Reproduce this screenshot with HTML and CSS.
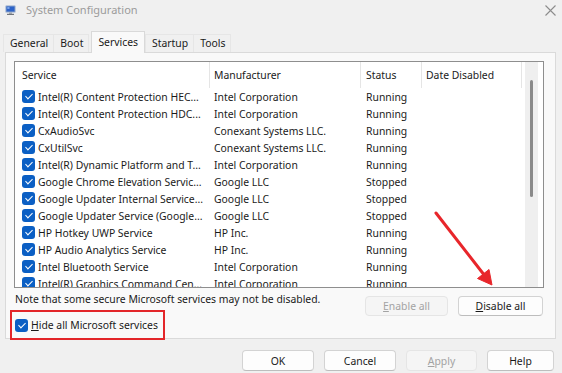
FILE: index.html
```html
<!DOCTYPE html>
<html>
<head>
<meta charset="utf-8">
<title>System Configuration</title>
<link rel="stylesheet" href="styles.css">
</head>
<body>
<div class="window">
  <div class="titlebar">
    <svg class="appicon" viewBox="0 0 11 10" aria-hidden="true">
      <rect x="0.5" y="0.5" width="10" height="7" rx="0.6" fill="#8aa2c8"/>
      <rect x="1.5" y="1.5" width="8" height="5" fill="#2d63c8"/>
      <rect x="2.3" y="2.2" width="2.2" height="1.6" fill="#8fb4f0"/>
      <rect x="4" y="7.5" width="3" height="1.3" fill="#9aa0a8"/>
      <rect x="2" y="8.8" width="7" height="1.2" fill="#70757d"/>
    </svg>
    <span class="title">System Configuration</span>
    <svg class="close" viewBox="0 0 11 11" aria-hidden="true">
      <path d="M0.5 0.5 L10.5 10.5 M10.5 0.5 L0.5 10.5" stroke="#8c8c8c" stroke-width="1.1" fill="none"/>
    </svg>
  </div>

  <div class="tabs">
    <div class="tab">General</div>
    <div class="tab">Boot</div>
    <div class="tab active">Services</div>
    <div class="tab">Startup</div>
    <div class="tab">Tools</div>
  </div>

  <div class="panel">
    <div class="list">
      <div class="grid">
        <div class="head">
          <div class="cell c1">Service</div>
          <div class="cell c2">Manufacturer</div>
          <div class="cell c3">Status</div>
          <div class="cell c4">Date Disabled</div>
        </div>
        <div class="row"><div class="cell c1"><span class="cb"></span><span class="txt">Intel(R) Content Protection HEC...</span></div><div class="cell c2">Intel Corporation</div><div class="cell c3">Running</div><div class="cell c4"></div></div>
        <div class="row"><div class="cell c1"><span class="cb"></span><span class="txt">Intel(R) Content Protection HDC...</span></div><div class="cell c2">Intel Corporation</div><div class="cell c3">Running</div><div class="cell c4"></div></div>
        <div class="row"><div class="cell c1"><span class="cb"></span><span class="txt">CxAudioSvc</span></div><div class="cell c2">Conexant Systems LLC.</div><div class="cell c3">Running</div><div class="cell c4"></div></div>
        <div class="row"><div class="cell c1"><span class="cb"></span><span class="txt">CxUtilSvc</span></div><div class="cell c2">Conexant Systems LLC.</div><div class="cell c3">Running</div><div class="cell c4"></div></div>
        <div class="row"><div class="cell c1"><span class="cb"></span><span class="txt">Intel(R) Dynamic Platform and T...</span></div><div class="cell c2">Intel Corporation</div><div class="cell c3">Running</div><div class="cell c4"></div></div>
        <div class="row"><div class="cell c1"><span class="cb"></span><span class="txt">Google Chrome Elevation Servic...</span></div><div class="cell c2">Google LLC</div><div class="cell c3">Stopped</div><div class="cell c4"></div></div>
        <div class="row"><div class="cell c1"><span class="cb"></span><span class="txt">Google Updater Internal Service...</span></div><div class="cell c2">Google LLC</div><div class="cell c3">Stopped</div><div class="cell c4"></div></div>
        <div class="row"><div class="cell c1"><span class="cb"></span><span class="txt">Google Updater Service (Google...</span></div><div class="cell c2">Google LLC</div><div class="cell c3">Stopped</div><div class="cell c4"></div></div>
        <div class="row"><div class="cell c1"><span class="cb"></span><span class="txt">HP Hotkey UWP Service</span></div><div class="cell c2">HP Inc.</div><div class="cell c3">Running</div><div class="cell c4"></div></div>
        <div class="row"><div class="cell c1"><span class="cb"></span><span class="txt">HP Audio Analytics Service</span></div><div class="cell c2">HP Inc.</div><div class="cell c3">Running</div><div class="cell c4"></div></div>
        <div class="row"><div class="cell c1"><span class="cb"></span><span class="txt">Intel Bluetooth Service</span></div><div class="cell c2">Intel Corporation</div><div class="cell c3">Running</div><div class="cell c4"></div></div>
        <div class="row"><div class="cell c1"><span class="cb"></span><span class="txt">Intel(R) Graphics Command Cen...</span></div><div class="cell c2">Intel Corporation</div><div class="cell c3">Running</div><div class="cell c4"></div></div>
      </div>
      <div class="scroll"><div class="track"><div class="thumb"></div></div></div>
    </div>

    <div class="actions">
      <div class="note">Note that some secure Microsoft services may not be disabled.</div>
      <div class="btn disabled enable"><u>E</u>nable all</div>
      <div class="btn disable"><u>D</u>isable all</div>
    </div>

    <div class="hidebox">
      <span class="cb"></span><span class="hidetxt"><u>H</u>ide all Microsoft services</span>
    </div>
  </div>

  <div class="footer">
    <div class="btn fb ok">OK</div>
    <div class="btn fb cancel">Cancel</div>
    <div class="btn fb disabled apply"><u>A</u>pply</div>
    <div class="btn fb help">Help</div>
  </div>

  <svg class="arrow" viewBox="0 0 562 373" aria-hidden="true">
    <line x1="436" y1="213" x2="485" y2="276" stroke="#e8262b" stroke-width="3" stroke-linecap="round"/>
    <polygon points="492,285 477.5,278.5 489,269.5" fill="#e8262b" stroke="#e8262b" stroke-width="1" stroke-linejoin="round"/>
  </svg>
</div>
</body>
</html>
```

FILE: styles.css
```css
* { box-sizing: border-box; margin: 0; padding: 0; }

html, body {
  width: 562px;
  height: 373px;
  overflow: hidden;
}

body {
  background: #f0f0f0;
  font-family: "Noto Sans", "Open Sans", sans-serif;
  font-size: 10.4px;
  color: #1a1a1a;
}

.window {
  position: relative;
  width: 562px;
  height: 373px;
  display: flex;
  flex-direction: column;
}

/* title bar */
.titlebar {
  height: 28px;
  display: flex;
  align-items: flex-start;
  padding: 5px 6px 0 5px;
}
.appicon { width: 11px; height: 10px; }
.title {
  margin-left: 10px;
  margin-top: -2px;
  line-height: 14px;
  font-size: 11px;
  color: #9b9b9b;
  flex: 1;
}
.close { width: 11px; height: 11px; }

/* tabs */
.tabs {
  height: 24px;
  display: flex;
  align-items: flex-end;
  padding-left: 3px;
  position: relative;
  z-index: 2;
}
.tab {
  height: 18px;
  line-height: 17px;
  padding: 0 5px 0 6px;
  border: 1px solid #e6e6e6;
  border-bottom: none;
  margin-right: -1px;
  color: #1a1a1a;
}
.tab.active {
  height: 22px;
  line-height: 20px;
  margin-bottom: -1px;
  margin-left: 3px;
  margin-right: 0;
  padding: 0 6px 0 6px;
  background: #f9f9f9;
  border-color: #d9d9d9;
}

/* panel */
.panel {
  margin: 0 6px 0 5px;
  height: 287px;
  border: 1px solid #dadada;
  background: #f9f9f9;
  padding: 8px 11px 0 8px;
  display: flex;
  flex-direction: column;
  position: relative;
  z-index: 1;
}

.list {
  height: 227px;
  border: 1px solid #8e8e8e;
  background: #ffffff;
  display: flex;
  overflow: hidden;
  flex-shrink: 0;
}
.grid { flex: 1; overflow: hidden; }

.head, .row {
  display: grid;
  grid-template-columns: 195px 151px 61px 100px;
}
.head { height: 26px; }
.row { height: 17px; }

.cell {
  display: flex;
  align-items: center;
  white-space: nowrap;
  overflow: hidden;
  border-right: 1px solid transparent;
}
.head .cell { border-right-color: #e5e5e5; }
.c1 { padding-left: 7px; }
.c2 { padding-left: 4px; }
.c3 { padding-left: 5px; }
.c4 { padding-left: 4px; }

.cb {
  position: relative;
  flex: none;
  width: 13px;
  height: 13px;
  border-radius: 3px;
  background: #0b5fc4;
}
.cb::after {
  content: "";
  position: absolute;
  left: 4.5px;
  top: 2.2px;
  width: 3px;
  height: 6px;
  border: solid #ffffff;
  border-width: 0 1.4px 1.4px 0;
  transform: rotate(45deg);
}
.txt { margin-left: 3px; }

.scroll {
  width: 18px;
  display: flex;
  flex: none;
}
.track {
  width: 13px;
  background: #efefef;
  display: flex;
  justify-content: center;
  padding-top: 18px;
}
.thumb {
  width: 3px;
  height: 117px;
  background: #8a8a8a;
  border-radius: 2px;
}

/* actions */
.actions {
  display: flex;
  align-items: flex-start;
  margin-top: 8px;
  height: 20px;
  padding: 0 1px;
  flex-shrink: 0;
}
.note {
  flex: 1;
  margin-top: -4px;
  line-height: 14px;
}

.btn {
  height: 20px;
  display: flex;
  align-items: center;
  justify-content: center;
  background: #fdfdfd;
  border: 1px solid #d3d3d3;
  border-bottom-color: #bdbdbd;
  border-radius: 4px;
  color: #1a1a1a;
}
.btn.disabled {
  background: #f5f5f5;
  border-color: #e5e5e5;
  color: #a3a3a3;
}
.enable { width: 83px; }
.disable { width: 85px; margin-left: 10px; }

.hidebox {
  align-self: flex-start;
  margin: -6px 0 0 -4px;
  height: 30px;
  border: 2px solid #e3262a;
  display: flex;
  align-items: center;
  padding: 0 5px 0 3px;
  position: relative;
  z-index: 1;
  flex-shrink: 0;
}
.hidetxt { margin-left: 3px; }

/* footer */
.footer {
  display: flex;
  justify-content: flex-end;
  gap: 10px;
  padding: 11px 8px 0 0;
}
.fb { height: 21px; }
.ok { width: 72px; }
.cancel { width: 72px; }
.apply { width: 71px; }
.help { width: 67px; }

.arrow {
  position: absolute;
  left: 0;
  top: 0;
  width: 562px;
  height: 373px;
  z-index: 5;
  pointer-events: none;
}
```
